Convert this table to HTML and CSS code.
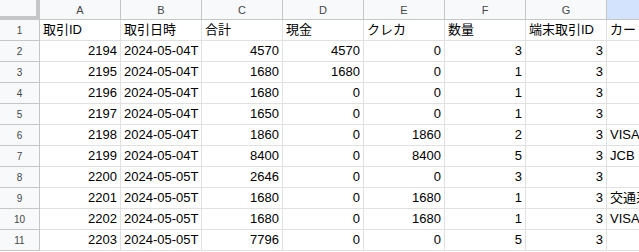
FILE: index.html
```html
<!DOCTYPE html>
<html lang="ja">
<head>
<meta charset="utf-8">
<link rel="stylesheet" href="styles.css">
</head>
<body>
<div class="sheet">
  <div class="corner"></div>
  <div class="ch">A</div><div class="ch">B</div><div class="ch">C</div><div class="ch">D</div><div class="ch">E</div><div class="ch">F</div><div class="ch">G</div><div class="ch sel"></div>

  <div class="rh">1</div><div class="c">取引ID</div><div class="c">取引日時</div><div class="c">合計</div><div class="c">現金</div><div class="c">クレカ</div><div class="c">数量</div><div class="c">端末取引ID</div><div class="c">カード</div>

  <div class="rh">2</div><div class="c n">2194</div><div class="c">2024-05-04T</div><div class="c n">4570</div><div class="c n">4570</div><div class="c n">0</div><div class="c n">3</div><div class="c n">3</div><div class="c"></div>
  <div class="rh">3</div><div class="c n">2195</div><div class="c">2024-05-04T</div><div class="c n">1680</div><div class="c n">1680</div><div class="c n">0</div><div class="c n">1</div><div class="c n">3</div><div class="c"></div>
  <div class="rh">4</div><div class="c n">2196</div><div class="c">2024-05-04T</div><div class="c n">1680</div><div class="c n">0</div><div class="c n">0</div><div class="c n">1</div><div class="c n">3</div><div class="c"></div>
  <div class="rh">5</div><div class="c n">2197</div><div class="c">2024-05-04T</div><div class="c n">1650</div><div class="c n">0</div><div class="c n">0</div><div class="c n">1</div><div class="c n">3</div><div class="c"></div>
  <div class="rh">6</div><div class="c n">2198</div><div class="c">2024-05-04T</div><div class="c n">1860</div><div class="c n">0</div><div class="c n">1860</div><div class="c n">2</div><div class="c n">3</div><div class="c">VISA</div>
  <div class="rh">7</div><div class="c n">2199</div><div class="c">2024-05-04T</div><div class="c n">8400</div><div class="c n">0</div><div class="c n">8400</div><div class="c n">5</div><div class="c n">3</div><div class="c">JCB</div>
  <div class="rh">8</div><div class="c n">2200</div><div class="c">2024-05-05T</div><div class="c n">2646</div><div class="c n">0</div><div class="c n">0</div><div class="c n">3</div><div class="c n">3</div><div class="c"></div>
  <div class="rh">9</div><div class="c n">2201</div><div class="c">2024-05-05T</div><div class="c n">1680</div><div class="c n">0</div><div class="c n">1680</div><div class="c n">1</div><div class="c n">3</div><div class="c">交通系</div>
  <div class="rh">10</div><div class="c n">2202</div><div class="c">2024-05-05T</div><div class="c n">1680</div><div class="c n">0</div><div class="c n">1680</div><div class="c n">1</div><div class="c n">3</div><div class="c">VISA</div>
  <div class="rh">11</div><div class="c n">2203</div><div class="c">2024-05-05T</div><div class="c n">7796</div><div class="c n">0</div><div class="c n">0</div><div class="c n">5</div><div class="c n">3</div><div class="c"></div>
</div>
</body>
</html>
```

FILE: styles.css
```css
html, body {
  margin: 0;
  padding: 0;
  background: #ffffff;
  overflow: hidden;
}

.sheet {
  display: grid;
  grid-template-columns: 40px repeat(8, 81px);
  grid-template-rows: 20px repeat(11, 21px);
  font-family: "Liberation Sans", Arial, "Noto Sans CJK JP", sans-serif;
  width: 1000px;
}

.corner {
  background: #f8f9fa;
  border-right: 4px solid #c4c7c5;
  border-bottom: 4px solid #c4c7c5;
}

.ch {
  background: #f8f9fa;
  border-right: 1px solid #c4c7c5;
  border-bottom: 1px solid #c4c7c5;
  color: #444746;
  font-size: 11px;
  display: flex;
  align-items: center;
  justify-content: center;
}

.ch.sel {
  background: #d3e3fd;
}

.rh {
  background: #f8f9fa;
  border-right: 1px solid #c4c7c5;
  border-bottom: 1px solid #c4c7c5;
  color: #444746;
  font-size: 10px;
  display: flex;
  align-items: center;
  justify-content: center;
}

.c {
  border-right: 1px solid #e1e1e1;
  border-bottom: 1px solid #e1e1e1;
  color: #000000;
  font-size: 13px;
  line-height: 20px;
  padding: 0 3px;
  white-space: nowrap;
  overflow: hidden;
  text-overflow: clip;
}

.c.n {
  text-align: right;
}
```
